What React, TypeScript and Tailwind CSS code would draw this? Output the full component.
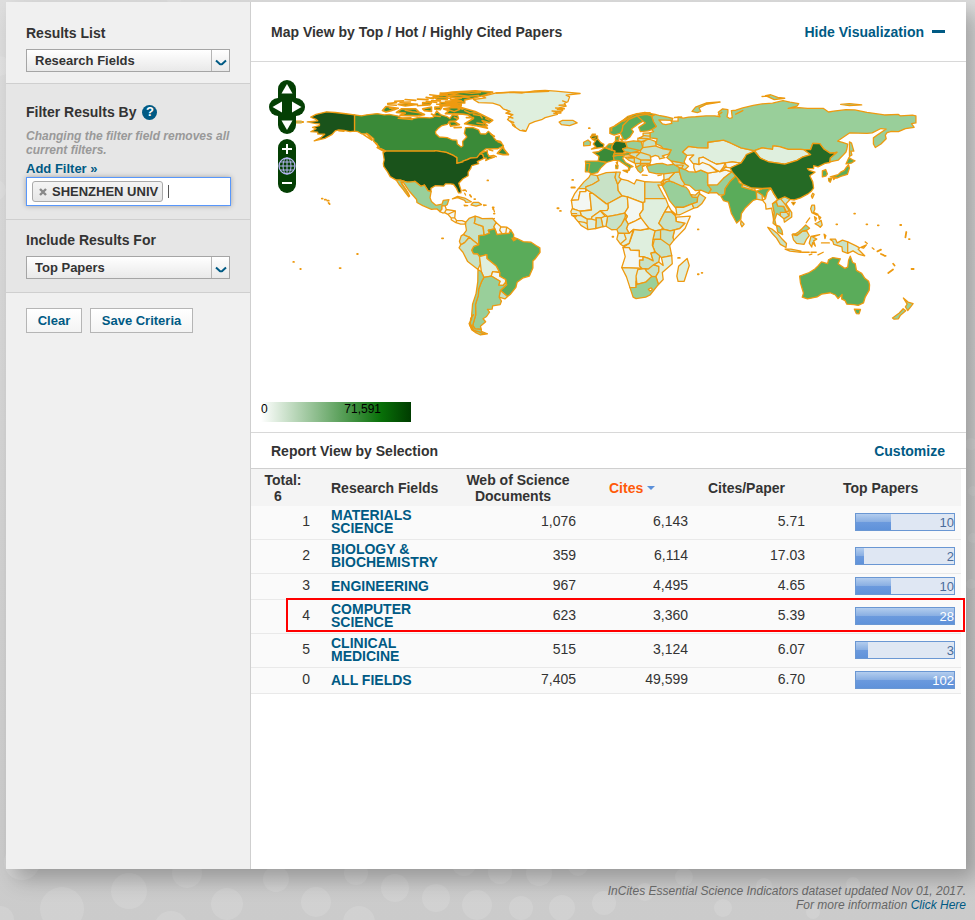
import React from "react";

type Shape = { d: string; fill: string };

const C = {
  us: "#1a531b",
  darkest: "#256a25",
  dark: "#3a8a38",
  mid: "#5aac5a",
  soft: "#99cf9a",
  pale: "#c8e2c6",
  faint: "#dfefde",
  none: "#f3f7f3",
};

// Outlines are given as longitude / latitude pairs.
const countries: Shape[] = [
  { fill: C.faint, d: "M-73 78.3-66 79.2-68 80-60 82-52 82.3-45 82-38 83.2-32 83.5-26 83-20 82.5-12 81.7-20 80.8-18 79.8-19 77-21 76-20 74.5-24 73.5-22 72-26 71-25 69.8-32 68-34 66.8-38 65.7-41 64.5-43 60.2-46.5 60.8-50.5 63.5-51 65-53.5 67-51 69.5-54.5 70.5-52 71.5-56 73-58 75-62 76.2-70 76.5Z" },
  { fill: C.dark, d: "M-141 69.6-137 69-134 69.6-128 70.3-124 69.6-121 69.8-116 68.9-114 67.8-109 68-108 67.3-104 68.2-98 67.8-96 68.2-94 71.8-91.5 69.5-88 68.5-86.5 67.5-85 69.6-82 69.2-81.5 67.5-83 66.2-86.5 66-88 64.2-91 63.5-93 62-94.7 60-94.5 58.8-92.5 57-88 56.6-85 55.3-82.5 55.2-82.2 53-80 51.3-79 52-79.2 54.5-76.8 57-78.2 59-77.5 62.3-73.5 62.4-70 61-69 58.8-66 58.7-64.5 60.2-62 58-61.5 56.8-60 55-57.5 54.5-56.5 53-55.8 52-59 50.3-66 50.2-69.5 47.5-65 49.2-65 47.7-64 46-61 45.5-64 44.5-66 43.6-65.5 45-67 45-67.8 47.1-69.2 47.4-71 45.3-74.7 45-76.5 44.1-79 43.3-79 42.9-82.5 42-82.5 45.3-84.5 46.5-88.5 48.2-95 49.3-95 49-123 49-125 50-127.5 51-128 53-130 54.5-130 56-133.5 58.8-137 58.8-139 60-141 60.3Z" },
  { fill: C.us, d: "M-141 69.6-146 70.2-152 70.9-157 71.3-163 69.8-166 68.3-163 67-162 66.2-168 65.6-163 64.6-161 64.5-161 63.5-165 62.5-163 61.7-166 60-162 59.8-162 58.7-158 58.6-160 56.8-164 54.8-158 56.2-154 58.3-152 60.5-150 61-147 60.8-143.5 60-141 60.3Z" },
  { fill: C.us, d: "M-123 49-124.7 48.3-124 44-124.5 42-124.3 40.3-122 37-120.6 34.5-117.1 32.5-114.8 32.5-111 31.3-108.2 31.5-106.5 31.8-103 29-101 29.7-99 26.5-97.2 25.9-97.3 27.8-94.7 29.4-90 29.1-89 30.4-86 30.3-84.3 30-82.7 27.8-81.5 25.2-80.1 25.3-80.1 26.8-81.4 30.7-79 33.3-76 35-76 37-74.5 39.2-74 40.7-70 41.8-70.8 43-67 44.8-67.8 47.1-69.2 47.4-71 45.3-74.7 45-76.5 44.1-79 43.3-79 42.9-82.5 42-82.5 45.3-84.5 46.5-88.5 48.2-95 49.3-95 49Z" },
  { fill: C.soft, d: "M-117.1 32.5-115.5 30-113 27-112 25.5-110 23-109.5 23.5-111.5 26.5-114.5 31.5-113 31-109.5 26-105.5 21.5-105.3 19.8-102 18-97 15.9-94 16.2-92.2 14.6-91 16-91 17.8-89.2 17.9-88 18.5-87 21.4-90.2 21-91 18.8-94.5 18.2-97 20.3-97.8 22.5-97.2 25.9-99 26.5-101 29.7-103 29-106.5 31.8-108.2 31.5-111 31.3-114.8 32.5Z" },
  { fill: C.none, d: "M-92.2 14.6-91 16-91 17.8-89.2 17.9-88.5 15.8-89.5 14-90.5 13.8ZM-88.5 15.8-83.3 15-83.7 11-85.7 11-87.6 13-89.5 14ZM-83.3 15-86 13.8-87.6 13M-85.7 11-83.7 11-82.6 9.5-83 8.3-85.7 10ZM-82.6 9.5-79.5 9.5-77.3 8.6-78 7.5-80.3 7.5-83 8.3Z" },
  { fill: C.pale, d: "M-85 21.9-82 23.2-78 22.3-74.2 20.2-77.5 19.9-78 21-82 22.5ZM-74.4 18.4-73 19.9-70 19.8-68.4 18.6-71.5 17.7ZM-78.3 18.3-76.3 18-78 17.8ZM-67.2 18.4-65.7 18.3-67 18ZM-78 25-77.5 24M-77.5 26.7-77 26.2M-61.5 16-61 14.5M-61.8 10.3-61 10.7" },
  { fill: C.pale, d: "M-77.3 8.6-75.5 10.7-72 12-72 10-72.5 8-70 7-67.5 6.2-67 1.2-69.9 1-70-4.2-73-2-75.3 0-78.8 1.5-77 4-77.5 7Z" },
  { fill: C.pale, d: "M-72 12-70 11.5-68 10.6-62 10.7-60 8.4-61.3 6-60.7 4.8-64.5 4-63.8 2.3-66.8 1.2-67.5 6.2-70 7-72.5 8-72 10Z" },
  { fill: C.none, d: "M-60 8.4-57.3 6-58 4-56.5 2-59.5 1.5-60.7 4.8-61.3 6ZM-57.3 6-54 5.8-54.5 2.3-56.5 2-58 4ZM-54 5.8-51.7 4.2-52.6 2.2-54.5 2.3Z" },
  { fill: C.mid, d: "M-51.7 4.2-50 1.5-50 0-48-.7-44.5-2.5-40-2.8-37-4.8-35-6-34.9-8.5-37.5-12-39-13.5-39-17.5-41-22-44.5-23-48-25.5-48.7-28.5-52-32.5-53.5-33.7-57.6-30.2-54-27-54.6-24-58-22.1-58-20-60-16.3-65.3-12-65.4-9.8-69.5-11-70.6-9.5-73-9.4-74-7.3-72.8-5.1-70-4.2-69.9 1-67 1.2-63.8 2.3-64.5 4-60.7 4.8-59.5 1.5-56.5 2-52.6 2.2ZM-51-.5-50-2-48.5-1-51-.5M-50.5-1.2-49-1.5" },
  { fill: C.pale, d: "M-78.8 1.5-75.3 0-78-3-80.3-4.3-81-2.2-80 .8Z" },
  { fill: C.pale, d: "M-80.3-4.3-78-3-75.3 0-73-2-70-4.2-72.8-5.1-74-7.3-73-9.4-70.6-9.5-69.5-11-69-15-70.4-18.3-76.3-13.8-79-8.5-81.2-6Z" },
  { fill: C.faint, d: "M-69.5-11-65.4-9.8-65.3-12-60-16.3-58-20-62-19.5-62.8-22-67-22.8-68.5-19.5-69-15Z" },
  { fill: C.none, d: "M-62.8-22-62-19.5-58-20-58-22.1-54.6-24-54.6-25.6-56-27.3-58.6-27.2-57.8-25Z" },
  { fill: C.pale, d: "M-57.6-30.2-53.5-33.7-55-35-58.3-34Z" },
  { fill: C.soft, d: "M-67-22.8-62.8-22-57.8-25-58.6-27.2-56-27.3-54.6-25.6-54-27-57.6-30.2-58.3-34-57-36.3-57.7-38.2-62-39-62.3-40.8-65-41-63.8-42.5-65.5-45-67.5-46.3-66-48-69-50.5-68.5-52.3-72-52-73.4-50-71.7-44-71.8-38-70.2-33-70-29.5-68.3-25Z" },
  { fill: C.soft, d: "M-70.4-18.3-68.5-19.5-67-22.8-68.3-25-70-29.5-70.2-33-71.8-38-71.7-44-73.4-50-72-52-68.5-52.3-68.5-53.5-65-54.8-69-55.5-72-54-74-52.5-75.5-49-74-46.5-74-44-73.5-38-71.5-32-70.5-25Z" },
  { fill: C.pale, d: "M-24 65.5-22 66.4-16 66.4-13.7 65-18 63.4-22.7 64Z" },

  { fill: C.pale, d: "M-6 35.8-2.2 35-1.2 32.3-5 30-8.7 28.7-8.7 27.5-13 27.7-9.8 31.5-7 34Z" },
  { fill: C.none, d: "M-13 27.7-8.7 27.7-8.7 26-12 26-13 21.3-17 21-15 25Z" },
  { fill: C.none, d: "M-17 21-13 21.3-12 26-8.7 26-8.7 27.3-4.9 25-6.5 25-5.5 15.5-12 14.8-16.3 16.3Z" },
  { fill: C.pale, d: "M-2.2 35 3 36.8 8.6 37 8 34 9.5 30 9.8 26.5 12 23.5 4 19.2 3 19-4.9 25-8.7 27.3-8.7 28.7-5 30-1.2 32.3Z" },
  { fill: C.pale, d: "M8.6 37 11 37 10.2 34.3 11.5 33 9.5 30 8 34Z" },
  { fill: C.faint, d: "M11.5 33 15.3 32.2 19 30.3 20.2 32.7 25 31.6 25 20 24 19.5 15 23 12 23.5 9.8 26.5 9.5 30Z" },
  { fill: C.pale, d: "M25 31.6 30 31.4 34.2 31.3 34.8 29.5 32.5 29.8 35.6 24 36.9 22 25 22Z" },
  { fill: C.faint, d: "M-12 14.8-5.5 15.5-6.5 25-4.9 25 3 19 4 19.2 4.2 16.5 3.5 15.3-.5 15-5.3 11.5-5.5 10.3-8 10.3-11.4 12.3Z" },
  { fill: C.faint, d: "M4 19.2 12 23.5 15 23 15.5 17 13.5 13.8 9 12.8 3.7 11.8 .3 14.5-.5 15 3.5 15.3 4.2 16.5Z" },
  { fill: C.none, d: "M15 23 24 19.5 24 15.7 22 13 22.8 11 19 9 15.5 7.5 14 10 15 12 13.5 13.8 15.5 17Z" },
  { fill: C.faint, d: "M25 22 36.9 22 38.5 18 36.4 14.5 34 10 33 8 35.5 5.4 34 4.2 30.8 3.6 27.4 5 24 8.7 22.8 11 22 13 24 15.7 24 20 25 20Z" },
  { fill: C.pale, d: "M36.4 14.5 40 14.5 42.4 12.4 43 9 48 8 45 5 42 4.2 39.5 3.6 36 4.5 33 8 34 10Z" },
  { fill: C.none, d: "M36.4 14.5 38.5 18 40 15.3 43 12.8 42.4 12.4 40 14.5ZM43 11.5 51 12 48 5 41.6-1.6 41 0 42 4.2 45 5 48 8 43 9Z" },
  { fill: C.pale, d: "M34 4.2 36 4.5 39.5 3.6 42 4.2 41 0 41.6-1.6 39.2-4.7 34-1 34 1ZM30.8 3.6 34 4.2 34-1 29.6-1.3ZM30.5-1 34-1 39.2-4.7 40.4-10.4 34.5-11.5 31-8.5 29.5-5Z" },
  { fill: C.faint, d: "M18.6 3.5 18.5 4.5 22.5 4.1 27.4 5 30.8 3.6 29.6-1.3 29.3-4.5 30.8-8.3 28.5-9 29.8-13.4 27-12 24-11 21.8-11 21.8-7.5 16.8-7.3 16-5.9 12.5-5.8 16-3.5Z" },
  { fill: C.none, d: "M15.5 7.5 19 9 22.8 11 27.4 5 22.5 4.1 18.5 4.5 16 2.2 14.5 5Z" },
  { fill: C.pale, d: "M14 13 15 12 14 10 15.5 7.5 14.5 5 16 2.2 9.8 2.3 9 4.5 11.5 7 13.5 10.5ZM3.7 11.8 9 12.8 13.5 13.8 14 12 11.5 7 9 4.5 6 4.3 2.8 6.3Z" },
  { fill: C.faint, d: "M9.8 2.3 13.2 2.2 14.3-1 11-3.8 9-1ZM13.2 2.2 16 2.2 18.5 4.5 16-3.5 12.5-5 11-3.8 14.3-1Z" },
  { fill: C.none, d: "M12.5-5.8 16-5.9 16.8-7.3 21.8-7.5 21.8-11 24-11 24-13 22-13 22-16.2 23.3-17.7 11.8-17.2 13.8-11Z" },
  { fill: C.pale, d: "M24-11 27-12 29.8-13.4 28.5-9 31-8.5 33.5-10.5 33-14 30-15.6 27-18 23.3-17.7 22-16.2 22-13 24-13ZM27-18 30-15.6 33-16.5 33-19.5 31.3-22.3 29-22.2 26-19.5 25-17.8Z" },
  { fill: C.faint, d: "M34.5-11.5 40.4-10.4 40.7-15 35-20 35.5-24 32.8-26.8 31.3-22.3 33-19.5 33-16.5 30.3-15.6 33-14 35.5-16ZM20-22 21-18.3 25-17.8 26-19.5 29-22.2 25.5-25.5 20.5-26.8ZM11.8-17.2 23.3-17.7 21-18.3 20-22 20-28.4 16.5-28.6 14.5-22.5ZM49.2-12 50.4-16 47.5-25 44-25 43.3-22 44.3-16.5Z" },
  { fill: C.soft, d: "M16.5-28.6 20-28.4 20-25 20.5-26.8 25.5-25.5 29-22.2 31.3-22.3 32.8-26.8 28-32.8 25.5-34 20-34.8 18.3-34Z" },
  { fill: "#fff", d: "M27-29.5 28.5-28.7 29.4-29.5 28-30.6Z" },
  { fill: C.faint, d: "M-16.5 16.3-12 14.8-11.4 12.3-16.7 12.4-17.3 14.7ZM-15 11-13.7 12.5-11.4 12.3-8 10.3-8 7.7-9.5 8.5-13.2 9ZM-13.2 9-9.5 8.5-8 7.7-7.6 4.4-11.5 6.8ZM-8 10.3-5.5 10.3-2.7 9.6-3 5-7.6 4.4-8 7.7ZM-5.3 11.5-.5 15 2.3 12 0 11-2.9 11-2.7 9.6-5.5 10.3ZM0 11 2.3 12 3.7 11.8 2.8 6.3 1 6ZM-16.5 13.5-14 13.4M-16 12-15 11.5" },
  { fill: C.pale, d: "M-2.9 11 0 11 1 6-3 5-2.7 9.6Z" },

  { fill: C.soft, d: "M35 29.3 37 31.5 39 32 42 31 46.5 29 48.5 28.5 50.2 26.5 51 24.5 52 23 55.2 22.7 55 20 52 19 47 17 43 17.2 42.8 16.4 39 21 37 25.5Z" },
  { fill: C.faint, d: "M43 17.2 47 17 52 19 53 16.6 45 12.8 43.3 12.7 42.8 16.4Z" },
  { fill: C.pale, d: "M52 19 55 20 55.2 22.7 56.3 24.8 59.8 22.5 57.5 19 55 17 53 16.6ZM52 23 51.5 24.2 54 24 56.3 26.2 56.3 24.8 55.2 22.7ZM38.8 33.4 42.4 37.2 44.8 37.2 46 33 48 30 46.5 29 42 31 39 32ZM35 29.3 36 32.5 38.8 33.4 39 32 37 31.5Z" },
  { fill: C.faint, d: "M35.8 36.5 42.4 37.2 38.8 33.4 36 32.5ZM34.3 31.3 35.8 33 35 29.5Z" },
  { fill: C.soft, d: "M26 40.3 29 41.2 32 41.9 35 42 38 41 41.5 41.5 44.5 39.8 44.8 37.2 36 36 32 36.1 27.5 37ZM26 41.8 29 41.2 26.5 40.5ZM44.5 39.8 48 38.5 50 37.3 54 37 57 38.2 61 36.5 60.8 31 63 27.2 61.5 25 57 26.8 54 26.5 50.5 29.5 48 30 46 33 44.8 37.2Z" },
  { fill: C.pale, d: "M41.5 41.5 40 43.4 44 42.7 48 41.8 50 40.3 48 38.5 44.5 39.8ZM43 41 47 41 46 39" },
  { fill: C.none, d: "M61 36.5 66 37.3 71 38.3 74.8 37.2 70 33.5 66.5 29.8 61 29.6Z" },
  { fill: C.soft, d: "M61 29.6 66.5 29.8 70 33.5 74.8 37.2 77.5 35.3 74 32 71 27.8 70.5 24.3 67.5 24 66 25.4 61.6 25.2 63 27.2Z" },
  { fill: C.mid, d: "M77.5 35.3 79 31 81 30 80.5 28.7 88 26.5 89 26.2 92 27.5 97 28 95 25.5 94 22 92 24 88.8 26 89 21.7 87 21 82.3 16.5 80.2 13.5 79.9 10.3 77.5 8.1 74.5 13.5 72.8 20 70 20.8 68.5 23.3 70.5 24.3 71 27.8 74 32Z" },
  { fill: C.pale, d: "M81 30 88 28 88 26.5 80.5 28.7ZM88.8 26 92 24 92.3 21 89 21.7ZM80 9.5 81.8 7.5 80.5 6 79.8 7.5Z" },
  { fill: C.none, d: "M97 28 98.5 25 101 21.5 98 19 99 14 98.6 10 97.5 16.5 94.3 16 94 19 92.3 21 94 22 95 25.5Z" },
  { fill: C.soft, d: "M98 19 100.2 20.3 101 17.8 104.5 17.5 105.5 14.3 102.5 12.2 100.5 13.5 99.3 10 100 7 102 6.2 100.3 6.5 98.3 8 98.6 10 99 14ZM100.3 6.5 102 6.2 103.4 4 103.8 1.5 101 3Z" },
  { fill: C.pale, d: "M101 21.5 102.2 22.4 105 19 107.5 15.3 106 14.3 104.5 17.5 101 17.8 100.2 20.3ZM102.5 12.2 102.5 14.2 106 14.3 107.5 12.3 104.5 10.5ZM102.2 22.4 105 23.3 108 21.5 105.7 19 109 14 109 11.5 104.8 8.6 104.5 10.5 107.5 12.3 107.5 15.3 105 19Z" },
  { fill: C.faint, d: "M46.5 48.5 50 51.7 55 51 61 50.8 61 54 70 55.2 74 53.6 80 50.8 87.3 49.2 85 47 82 45.3 80 42.2 75 42.8 71 42.3 66 41.5 62 43.5 58.5 45.5 56 45 56 41.3 52.5 42 50.5 44.5 53 46.8 49 46.5Z" },
  { fill: C.none, d: "M56 41.3 56 45 58.5 45.5 62 43.5 66 41.5 71 42.3 71.5 40 67.8 37.2 66.5 38 62 41 58 42.5ZM53 41.8 56 41.3 58 42.5 62 41 66.5 37.3 61 36.5 57 38.2 54 37 53 39.5ZM71 42.3 75 42.8 80 42.2 74 39.5 70 40ZM67.8 37.2 70 40 74 39.5 74.8 37.2 71 38.3Z" },
  { fill: C.soft, d: "M30.8 69.8 33 69.3 37 68.5 41 67.5 40.5 66.4 33 66.7 35 64.5 37 64 40.5 64.7 40 66 44 66 44 68.3 47 67.7 50 68.3 54 68.5 60 69 65 69 68 68.5 67 71 69.5 73 72.5 72.5 72.5 71 72 68.5 73.5 67.5 75 68 74.5 72 77 72.2 81 73.5 87 75 92 75.8 98 76.2 104 77.6 108 76.8 113 76 112 74.5 107 73.2 113 73.7 118 73.2 127 73.3 130 71.2 133 71.7 140 72.5 145 72.4 152 71 160 69.8 162 69.5 170 69.8 171 69 178 69.4 180 69 180 65 177.5 64.6 179 62.5 174 61.7 170 60 166 60.2 163.5 59.5 162.5 58 163 56 160 53 156.8 51 155.7 53 155.7 56.5 158.5 58.5 163 61.5 160 61.8 155 59.3 152 59 142 59.3 135.3 54.7 138 54 141 53 140.5 50 140 48.5 138 46.3 135.5 43.8 131.5 43 130.6 42.5 131 45 134.8 48.3 131 47.8 127.5 50 125 53.2 121 53.3 119.8 49.8 116 49.8 114 50 107 50 102 51.5 98.3 52 98 50 92 50.8 87.5 49.2 80 50.8 74 53.6 70 55.2 61 54 61 50.8 55 51 50 51.7 46.5 48.5 49 46.5 47.5 43 48 41.8 44 42.7 40 43.4 37.5 45.3 39 47.2 40 49.6 35.5 50.5 34 52 31.5 53 32 56 28 56.5 27.8 59.3 30 60 29 61.2 31.5 63 30 65.5 28.8 68.5Z" },
  { fill: C.soft, d: "M52 71.5 55 70.8 57 71.5 56 73.5 60 75.5 68 76.8 68 77 60 76.3 54 74ZM142 46 142 54.2 143.2 53.5 144.5 49 142.8 49 143.4 46.8ZM94 80.5 97 81 101 79.5 105 79 99 78.2ZM137 75.5 142 76 149 75.2 142 74.8ZM92 80 96 80.3" },
  { fill: C.faint, d: "M87.8 49.2 92 50.8 98 50 98.3 52 102 51.5 107 50 114 50 116 49.8 119.8 47 115 45.5 112 43.7 105 41.6 96 42.8 91 45Z" },
  { fill: C.darkest, d: "M73.8 39.5 75 37 79 32.5 81 30.2 86 28 92 27.8 97 28 98.7 25 101 21.3 105 23 108 21.6 110.5 21.2 114 22.4 118 24.5 120 26 121.5 28 121 31.5 119.3 35 122.3 37 119 38 118 39 121.5 39 121.5 40.7 124 40 128 42 130.6 42.5 131 45 134.8 48.3 131 47.8 127.5 50 125 53.2 121 53.3 119.8 49.8 116 49.8 119.8 47 115 45.5 112 43.7 105 41.6 96 42.8 91 45 87.5 49 83 47 82 45 80 42.2ZM109 19.8 111 19.8 110 18.4Z" },
  { fill: C.mid, d: "M126.5 37.7 128.4 38.5 129.4 36 128.5 34.8 126.5 34.4ZM131 34.3 135.5 35.6 137 37 139 38 140 39.5 141.5 41.2 142 39.3 140.8 35.7 137 34.6 135 33.7ZM130 33.5 131.8 33.3 131 31.3 130.2 32ZM132.5 34 134.5 34.2 133 32.8ZM140 41.7 141.7 45.3 143.5 44.2 145.2 43.5 143 42.1Z" },
  { fill: C.pale, d: "M121 25 121.8 24.5 120.8 22.2 120.2 23.5ZM120.5 18.3 122 18.3 122.2 16 121.5 14.2 124 13 123.5 12.6 120.5 14 119.8 16.2ZM122 11.7 123.2 10.8 122.5 9.3ZM124.3 12.3 125.6 11.2 124.8 10.2ZM122.3 7.7 124 8.4 125.8 9.6 126.4 7 125.3 5.7 124 6.8ZM117.3 8.3 119.3 11" },
  { fill: C.pale, d: "M95.3 5.7 98 4.5 101 2 103.5-1 106-3.5 105.7-5.8 102.5-4 100.3-.5 98 2ZM105.2-6.7 108.5-6.7 114.3-7.8 114.3-8.6 108-7.8ZM109.2 1.5 112 1 115 3.5 117.6 3.5 119 1 117.5-1 116-4 111.7-3.4 110-1.5ZM120 .5 125 1.5 121 .2 123.3-1 121.5-2 122.5-5 121-3 120.4-5.5 119-3.3ZM127.5 1.8 128.5 1 128-.7ZM115-8.5 119-8.5M119-10 120.5-9.5M120-8.5 123-8.5M124-10 127-8.5M126-3.2 130.5-3.2M131-1 134-1 135-3.2 138-1.6 141-2.6 141-9.1 138-8 137.7-5.5 133-4 132.5-2.3 131-1.2" },
  { fill: C.soft, d: "M109.6 2 111.2 2 113 3.2 115 5 117 7 119.2 5.2 117.6 4 115 3.5 112 1.2Z" },
  { fill: C.faint, d: "M141-2.6 145.5-4.7 147.8-6 147-6.8 150.7-10.5 147-9.5 144-7.7 141-9.1ZM148.5-5.7 151.7-4.3 150-6.2ZM152.2-3.5 151-2.6M155-6 156-6.8" },
  { fill: C.mid, d: "M113.5-22 114-26 115.7-31.7 115-34 118-35 123.5-33.9 126-32.3 131-31.5 134-32.8 135.5-34.8 137.8-32.5 137.5-35 139.5-36 140.5-38 144.5-38.3 147-38.7 150-37.3 151-34 153.3-30 153.5-27 153-25 150.8-23.3 149-20.5 146-18.8 145.3-15 143.8-14.3 142.5-10.7 141.5-13 141-17 139.3-17.6 135.5-15 136.8-12.2 132.5-11.5 130-12.8 129.5-15 126-14 124-16.3 122.2-18 119-20 115-21.5ZM144.8-40.8 148.3-41 147.5-43.5 146-43.4Z" },
  { fill: C.soft, d: "M172.8-34.5 175.5-36.8 178.4-37.7 177-39.5 175.3-41.6 174-39.5 175-38ZM172.7-40.6 174.2-41.7 171-44.5 170-46.3 167.5-46.5 166.6-45.8 170.5-43Z" },

  { fill: C.mid, d: "M5 59 5 62 8 63.3 12 66 15 68.5 18 69.5 25 71 30.8 69.8 28.8 69 26 69.8 20.5 69 16 67 12.5 63.5 12 60.5 11 59.2 7.5 58.1Z" },
  { fill: C.mid, d: "M11 59.2 12 60.5 12.5 63.5 16 67 20.5 69 24 66 21.5 64.5 17.3 61.5 18.5 60 16.5 57 14.2 55.4 12.8 55.5ZM20.5 69 26 69.8 28.8 69 30 65.5 31.5 63 29 61.2 27 60.5 22.5 60 21.5 62.5 25.3 65 24 66ZM8.2 55 8.3 57 10.5 57.6 10 55ZM11 55.7 12.5 55.9 12 54.8Z" },
  { fill: C.darkest, d: "M-5.5 50.1-3 50.6 1.3 51.2 1.6 52.8-.2 53.8-2 56-2 57.6-4 57.6-3.2 58.6-5 58.6-6 56.8-4.8 55.5-3.2 54.8-4.5 53-3 51.4Z" },
  { fill: C.soft, d: "M-10 52-6.3 52.2-6 54-7.5 55.3-10 54Z" },
  { fill: C.dark, d: "M-4.7 48.3-1.5 48.6 0 49.5 2 51 6 49.5 8 49 7 46.2 7.5 43.8 3 42.5-1.7 43.3-1.2 46ZM8.6 42.5 9.4 42.9 9.3 41.5Z" },
  { fill: C.darkest, d: "M6 51.5 7 53.5 8.5 54.8 14 54 15 51 12.3 50.2 13.5 48.7 12.5 47.6 7.6 47.6 8 49 6.2 49.7Z" },
  { fill: C.mid, d: "M2.5 51.1 4.5 53 7 53.2 6 51.5 6.2 49.7ZM7 46.2 7.6 47.6 12.5 47.6 17 48.6 16 46.8 9.5 46.5ZM7 46 9.5 46.5 13.5 46.5 12.3 45 14 42.5 18.3 40.2 16.8 39.8 16 38 15.5 40 10.3 43.5 7.5 43.8ZM12.5 38 15.5 38.2 15 36.8ZM8.3 41 9.7 41 9.5 39.1 8.5 39ZM-9 43.3-1.7 43.3 3 42.5-.3 39.3-2 36.8-5.5 36-7.3 37.2-6.5 42-8.8 42ZM-8.8 42-6.5 42-7.3 37.2-9 37.2Z" },
  { fill: C.soft, d: "M14 54 18.5 54.8 23 54.3 23.8 51 22.5 49.2 15 51ZM12.3 50.2 15 51 22.5 49.2 17 48 13.5 48.7ZM20 39.7 22.5 41.2 26 41.2 23.5 40 24 38 22.5 36.6 21 38ZM23.5 35.4 26.3 35.2" },
  { fill: C.pale, d: "M16 46.8 17 48 22.5 48.3 28 46.5 28.5 44 22.7 44 18.5 45.8ZM20.3 46.2 22.5 48.3M13.6 45.5 18.5 45.8 22.7 44 22.5 42 19.5 42 15.5 44ZM15.5 45 19 45 19 42.5M22.7 44 28.5 43.7 28 42 22.5 42ZM19.5 42 20 39.7 22.5 41.2 22.5 42ZM23.8 51 31 52 35.5 50.2 40 49.6 38.5 47.2 35 46.2 36.5 45.3 33.5 44.5 32.8 46 31 46.5 28.5 45.5 28 46.5 22.5 48.3 22.5 49.2ZM23.8 51 24 54 27 56 31 54.5 31.5 52ZM21 56 24 57.5 24 59.2 28 59.3 28 56 23 54.3 21 55ZM21 56.3 27 56M24.5 57.8 27.5 57.5M32.5 35 34.5 35.5" },
];

const arctic =
  "M-90 73-85 73.8-80 73.7-76 72.6-72 71.5-67 69-62 66.5-64 65-68 66.3-65 63.5-68 63-65 62-72 63.5-78 64.5-73 67.5-76 69.5-79 70-89 70.3-87 72ZM-117 71-114 73-106 73-104 71-101 69.7-105 69-115 69.3-112 70.5ZM-125 72-123 74.3-116 73.3-120 72-123 71.2ZM-116 75.5-110 76-105 75.5-112 74.6ZM-122 76-117 76.5M-90 76.5-78 76.3-78 78-73 79-66 81-62 82.5-72 83.2-85 82.5-92 81.3-87 80-80 79-86 78.3-80 77.5ZM-96 80-88 81.2-88 78.3-94 78.5ZM-92 76.7-86 76-80 75.7-80 74.7-92 74.7ZM-102 73-97 74-97 71.5-101 72ZM-95 74-91 74-92 72.5-95 72.8ZM-87 65.5-84 65.8-81 64-86 63.2ZM-59.3 47.7-56 51.5-55.5 50-53 47-56 47ZM-102 76.5-97 76.5-98 75.2-102 75.6ZM-105 78.5-99 78.2M-112 78.3-106 77.8M-118 77.3-113 77.5M-100 79.5-96 78.8M-97 77.5-92 77.7M-84 62.3-80 62.5M-134 59-131 55.5M-128 51-124 48.7M-73 68-77 68M-82 73.5-79 72.8M-97 70-95 69M-64 49.8-62 49.2";

// Fjords and small inlets along the northern coasts.
const inlets =
  "M-92 82-84 81.6-80 82.4-74 81.8-69 82.3M-88 80.6-82 80.8-76 80.2-70 80.6M-86 79.4-79 79.7-75 79.2M-98 81-93 80.4M-97 79.2-91 79.6-86 78.8M-89 77.3-83 77.7-79 77M-100 77.3-94 76.6M-94 75.6-88 75.3-82 75.4M-105 74.8-99 75.2M-121 73.5-118 72.6M-112 72.2-108 71.3-103 70.6M-122 75.3-117 75M-115 76.8-109 76.9M-88 72.8-84 71.4-81 72.6M-78 72-75 70.6-71 70.7M-73 69.8-69 69.2-68 67.8M-66 67.5-64 66.6M-71 65-67 64.4M-70 63.2-66 62.8M-116 67.6-108 66.9M-96 69-92 68.6M-84 68.2-82 67.4M-63 58.5-61 57.4M-59 54.3-57 53.6M-22 77.5-20 76.8M-26 73.5-21 73M-28 71.8-23 71.3M-27 70.5-23 70.6M-25 72.6-22 72.5M-24 75-20.500 75.2M-53 70.3-50.500 69.6M-53 68.5-50.500 67.8M-52 66-50 65.2M-52.500 71.5-54 72.2M-50 64.2-49 62.6M-60 82-50 82.6-42 82.4-30 83M-45 60.8-43.500 60.5M6 60.500 6 62M8 63.500 14 67.500M13 66 19 69.800M20 70.200 28 70.800M-6 57-4 58M-5 56-3 56.500M-4 55.2-2.500 55.500M-150 60.500-147 60.300M-136 58.500-133 56.500-131 55.200M-129 53.500-127 51.500M-126 50.2-124 49.2M-64 46-61.500 46.500-60 45.8M-73-44-74.5-46-74.8-49-73.8-51M-73.500-51-73-53-70-53.600-67-55M-75-50-73.500-52.500-71-53.500M-114 30.5-111.500 27-110 24.500M42 68 46 68.300M67 69.500 69 71M77 70 81 72";

const specks =
  "M-159.7 22h.5M-158 21.4h.7M-156.5 20.8h.8M-155.8 19.5l.6-.6M-176-14h.4M-172-18h.3M-149.5-17.5h.6M-139.5-9.5h.4M-91 -.6h.7M-25 16.5h.7M-23.5 15h.5M-17 28.3h2M-16.5 32.6h.5M55.3-21h.5M57.5-20.2h.4M55.3 4.5h.4M44-11.7h1M-7 62h.5M-65 32.3h.4M-62 17h.6M-61.3 13.5h.4M6.5 .3h.5M144.7 13.5h.5M134.5 7.4h.5M151.7 7.4h.5M171 7h.6M158.2 6.8h.5M167-15l.8-1M164.2-20.3l2.7 2M177.5-18h1.2M158-8l2 1M160-9.5l1.5-.6M162-10.5h.7M174 0l.5 3M176 -1h.4M-78.9 26.7l1 .1M-75 24l.7-1M-72.5 21.7h.5M-61.7 17v-1";

function WorldMap() {
  return (
    <svg viewBox="251 62 715 330" className="block h-[330px] w-full" role="img" aria-label="World map of citations">
      <g
        transform="matrix(1.749 0 0 -1.76 601.1 237.3)"
        stroke="#ee9a10"
        strokeLinejoin="round"
        strokeLinecap="round"
      >
        {countries.map((s, i) => (
          <path key={i} d={s.d} fill={s.fill} strokeWidth="1.3" vectorEffect="non-scaling-stroke" />
        ))}
        <path d={arctic} fill={C.dark} strokeWidth="1.7" vectorEffect="non-scaling-stroke" />
        <path d={inlets} fill="none" strokeWidth="1.5" vectorEffect="non-scaling-stroke" />
        <path d={specks} fill="none" strokeWidth="1.8" vectorEffect="non-scaling-stroke" />
      </g>
      <path d="M296 121h5l3 1-3 1h-5z" fill={C.soft} stroke="#ee9a10" />
    </svg>
  );
}

function MapControls() {
  const b = "absolute flex size-[18px] items-center justify-center bg-[#043f04]";
  return (
    <div className="absolute top-[18px] left-[18px] flex flex-col items-center gap-[5px]">
      <div className="relative h-[54px] w-9">
        <button aria-label="Pan up" className={`${b} top-0 left-[9px] rounded-t-full`}>
          <svg width="18" height="18"><path d="M9 4 14.5 13.5h-11z" fill="#fff" /></svg>
        </button>
        <button aria-label="Pan left" className={`${b} top-[18px] left-0 rounded-l-full`}>
          <svg width="18" height="18"><path d="M3.5 9 13 3.5v11z" fill="#fff" /></svg>
        </button>
        <button aria-label="Pan right" className={`${b} top-[18px] left-[18px] rounded-r-full`}>
          <svg width="18" height="18"><path d="M14.5 9 5 3.5v11z" fill="#fff" /></svg>
        </button>
        <button aria-label="Pan down" className={`${b} top-9 left-[9px] rounded-b-full`}>
          <svg width="18" height="18"><path d="M9 14 14.5 4.5h-11z" fill="#fff" /></svg>
        </button>
      </div>
      <div className="flex flex-col overflow-hidden rounded-full bg-[#043f04]">
        <button aria-label="Zoom in" className="size-[18px]">
          <svg width="18" height="18"><path d="M4 10h10M9 5v10" stroke="#fff" strokeWidth="2" /></svg>
        </button>
        <button aria-label="Reset zoom" className="size-[18px]">
          <svg width="18" height="18" fill="none" stroke="#b4b4f0">
            <circle cx="9" cy="9" r="8" strokeWidth="1.3" />
            <ellipse cx="9" cy="9" rx="4" ry="8" />
            <path d="M9 1v16M1 9h16M2.500 5h13M2.500 13h13" />
          </svg>
        </button>
        <button aria-label="Zoom out" className="size-[18px]">
          <svg width="18" height="18"><path d="M4 8h10" stroke="#fff" strokeWidth="2" /></svg>
        </button>
      </div>
    </div>
  );
}

function Dropdown({ id, options }: { id: string; options: string[] }) {
  return (
    <div className="relative mt-2 h-[23px] w-[204px] border border-[#a5a5a5] bg-linear-to-b from-white to-[#e9e9e9]">
      <select id={id} className="block h-[21px] w-full appearance-none bg-transparent pt-px pl-2 text-[13px] font-bold text-[#333]">
        {options.map((o) => (
          <option key={o}>{o}</option>
        ))}
      </select>
      <span className="pointer-events-none absolute inset-y-0 right-0 flex w-[18px] items-center justify-center border-l border-[#b5b5b5]">
        <svg width="12" height="8" className="mt-1"><path d="M1 1.500 4.500 4.800Q6 5.800 7.500 4.800L11 1.500" fill="none" stroke="#005a84" strokeWidth="2" /></svg>
      </span>
    </div>
  );
}

function Sidebar() {
  return (
    <aside className="w-[245px] shrink-0 border-r border-[#cfcfcf] bg-[#f0f0f0] text-sm/4 font-bold">
      <section className="border-b border-[#cfcfcf] px-5 pt-[23px] pb-[11px]">
        <label htmlFor="results" className="block">Results List</label>
        <Dropdown id="results" options={["Research Fields", "Authors", "Institutions"]} />
      </section>
      <section className="border-b border-[#cfcfcf] bg-[#e6e6e6] px-5 pt-5 pb-[13px]">
        <div className="flex h-4 items-center gap-[6px]">
          <label htmlFor="filter">Filter Results By</label>
          <button aria-label="Help" className="flex size-[15px] items-center justify-center rounded-full bg-[#005a84] text-[13px] text-white">?</button>
        </div>
        <p className="mt-[9px] text-xs/[14px] text-[#999] italic">Changing the filter field removes all current filters.</p>
        <a href="#filter" className="mt-1 block text-[13px] leading-4 text-[#005a84]">Add Filter »</a>
        <div className="flex h-[29px] w-[205px] items-center border border-[#5897fb] bg-white pl-[5px] shadow-[0_0_5px_rgba(0,0,0,0.3)]">
          <span className="flex h-[21px] shrink-0 items-center gap-[5px] rounded-[3px] border border-[#aaa] bg-linear-to-b from-[#f4f4f4] to-[#e6e6e6] pr-1 pl-[6px] text-[13px]">
            <button aria-label="Remove SHENZHEN UNIV">
              <svg width="8" height="8"><path d="M1 1 7 7M7 1 1 7" stroke="#888" strokeWidth="2.4" /></svg>
            </button>
            SHENZHEN UNIV
          </span>
          <span className="ml-[5px] h-[13px] w-px shrink-0 bg-[#555]" />
          <input id="filter" className="h-5 w-full min-w-0 bg-transparent pl-1 outline-none" />
        </div>
      </section>
      <section className="border-b border-[#cfcfcf] bg-[#e6e6e6] px-5 pt-3 pb-[13px]">
        <label htmlFor="include" className="block">Include Results For</label>
        <Dropdown id="include" options={["Top Papers", "Hot Papers", "Highly Cited Papers"]} />
      </section>
      <div className="mt-[15px] flex gap-2 px-5 text-[13px] text-[#005a84]">
        <button className="h-[25px] w-14 border border-[#b5b5b5] bg-linear-to-b from-white to-[#f4f4f4]">Clear</button>
        <button className="h-[25px] w-[103px] border border-[#b5b5b5] bg-linear-to-b from-white to-[#f4f4f4]">Save Criteria</button>
      </div>
    </aside>
  );
}

const rows = [
  { n: 1, name: "MATERIALS SCIENCE", docs: "1,076", cites: "6,143", cpp: "5.71", top: 10, pct: 36 },
  { n: 2, name: "BIOLOGY & BIOCHEMISTRY", docs: "359", cites: "6,114", cpp: "17.03", top: 2, pct: 8 },
  { n: 3, name: "ENGINEERING", docs: "967", cites: "4,495", cpp: "4.65", top: 10, pct: 36 },
  { n: 4, name: "COMPUTER SCIENCE", docs: "623", cites: "3,360", cpp: "5.39", top: 28, pct: 100, marked: true },
  { n: 5, name: "CLINICAL MEDICINE", docs: "515", cites: "3,124", cpp: "6.07", top: 3, pct: 12 },
  { n: 0, name: "ALL FIELDS", docs: "7,405", cites: "49,599", cpp: "6.70", top: 102, pct: 100 },
];

function Bar({ value, pct }: { value: number; pct: number }) {
  return (
    <div className="relative ml-auto h-[18px] w-[100px] border border-[#6a97d3] bg-[#dfe7f3]">
      <div
        className="h-full bg-[linear-gradient(#b3cdee,#88aee2_50%,#6b9ade_50%,#5f92da)]"
        style={{ width: `${pct}%` }}
      />
      <span className={`absolute right-0 -bottom-px text-[13px] leading-4 ${pct === 100 ? "text-white" : "text-[#4a6c9b]"}`}>
        {value}
      </span>
    </div>
  );
}

function Report() {
  const num = "border-b border-[#e9e9e9] pt-[2px] pb-[5px] pr-[10px] text-right";
  const box = "border-b border-[#e9e9e9] pt-[3px] pb-1";
  return (
    <table className="w-full table-fixed border-separate border-spacing-0 bg-[#fafafa] text-sm/4">
      <colgroup>
        <col className="w-[69px]" />
        <col className="w-[134px]" />
        <col className="w-[132px]" />
        <col className="w-[112px]" />
        <col className="w-[117px]" />
        <col />
      </colgroup>
      <thead>
        <tr className="h-[37px] bg-[#f4f4f4] font-bold">
          <th className="p-0 pr-[5px]">Total:<span className="block pr-[10px]">6</span></th>
          <th className="p-0 pl-[11px] text-left">Research Fields</th>
          <th className="p-0 pr-1">Web of Science<span className="block pr-[10px]">Documents</span></th>
          <th className="p-0 pl-[23px] text-left">
            <button className="flex items-center gap-1 text-[#ff5a0a]">
              Cites
              <svg width="8" height="4"><path d="M0 0h8L4 4z" fill="#5b8fd9" /></svg>
            </button>
          </th>
          <th className="p-0 pl-[10px] text-left">Cites/Paper</th>
          <th className="p-0 pl-7 text-left">Top Papers</th>
        </tr>
      </thead>
      <tbody>
        {rows.map((r) => (
          <tr key={r.n} className="relative">
            <td className={num}>
              {r.n}
              {r.marked && <span className="pointer-events-none absolute -top-[2px] -right-1 left-[35px] h-[34px] border-2 border-[#f00]" />}
            </td>
            <td className={`${box} pr-4 pl-[11px]`}>
              <a href={`#field-${r.n}`} className="block leading-[13px] font-bold text-[#005a84]">{r.name}</a>
            </td>
            <td className={num}>{r.docs}</td>
            <td className={num}>{r.cites}</td>
            <td className={num}>{r.cpp}</td>
            <td className={`${box} pr-[6px]`}><Bar value={r.top} pct={r.pct} /></td>
          </tr>
        ))}
      </tbody>
    </table>
  );
}

const dots = [
  [62, 909, 22], [129, 891, 18], [187, 873, 15], [171, 928, 17], [227, 904, 16], [276, 879, 13], [316, 902, 15],
  [359, 922, 16], [356, 873, 12], [395, 888, 14], [436, 898, 14], [477, 905, 15], [500, 872, 12], [539, 873, 13],
  [521, 908, 12], [562, 908, 13], [604, 903, 12], [578, 866, 10], [464, 864, 12], [684, 877, 9], [764, 886, 8],
  [645, 892, 9], [723, 908, 9], [853, 884, 7], [813, 912, 7], [22, 862, 18], [0, 920, 14], [-4, 190, 10],
  [0, 66, 10], [971, 444, 6], [973, 491, 5], [973, 538, 5], [971, 584, 5], [174, 0, 7],
];

export default function App() {
  return (
    <div className="relative isolate flex min-h-screen flex-col bg-linear-to-b from-[#dedede] to-[#cbcbcb] pt-[2px] pr-[9px] pl-[6px] font-['Liberation_Sans',Arial,sans-serif] text-[#333]">
      <svg className="absolute inset-0 -z-10 size-full" aria-hidden="true">
        {dots.map(([x, y, r], i) => (
          <circle key={i} cx={x} cy={y} r={r} fill="#fff" opacity="0.12" />
        ))}
      </svg>
      <main className="flex flex-1 bg-white shadow-[10px_10px_20px_rgba(0,0,0,0.26)]">
        <Sidebar />
        <div className="min-w-0 flex-1">
          <div className="flex h-[60px] items-center justify-between border-b border-[#d8d8d8] pr-[21px] pl-5 text-sm/4 font-bold">
            <h2>Map View by Top / Hot / Highly Cited Papers</h2>
            <button className="flex items-center gap-2 text-[#005a84]">
              Hide Visualization
              <span className="h-[3px] w-[13px] bg-[#005a84]" />
            </button>
          </div>
          <div className="relative border-b border-[#d8d8d8] pb-[10px]">
            <WorldMap />
            <MapControls />
            <div className="mt-[10px] ml-[10px] flex h-5 w-[150px] justify-between bg-[linear-gradient(90deg,#fff,#087008_80%,#003c00)] pr-[30px] text-xs/[14px] text-black">
              <span>0</span>
              <span>71,591</span>
            </div>
          </div>
          <div className="flex h-9 items-center justify-between border-b border-[#cfcfcf] pr-[21px] pl-5 text-sm/4 font-bold">
            <h2>Report View by Selection</h2>
            <button className="text-[#005a84]">Customize</button>
          </div>
          <div className="pr-[5px]">
            <Report />
          </div>
        </div>
      </main>
      <footer className="pt-[15px] pb-2 text-right text-xs/[14px] text-[#666] italic">
        <p>InCites Essential Science Indicators dataset updated Nov 01, 2017.</p>
        <p>For more information <a href="#info" className="text-[#005a84]">Click Here</a></p>
      </footer>
    </div>
  );
}
